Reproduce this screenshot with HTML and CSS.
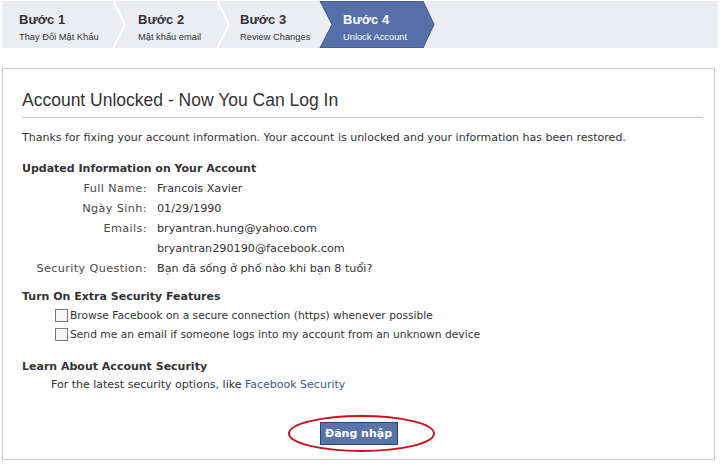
FILE: index.html
```html
<!DOCTYPE html>
<html lang="vi">
<head>
<meta charset="utf-8">
<title>Account Unlocked</title>
<link rel="stylesheet" href="styles.css">
</head>
<body>
<div class="steps">
  <svg class="steps-bg" width="716" height="47" viewBox="0 0 716 47" aria-hidden="true">
    <rect x="0" y="0" width="716" height="47" fill="#ecedf3"/>
    <polyline points="111,-1 123,23.5 111,48" fill="none" stroke="#ffffff" stroke-width="2"/>
    <polyline points="215,-1 227,23.5 215,48" fill="none" stroke="#ffffff" stroke-width="2"/>
    <polygon points="318,0 421,0 432,23.5 421,47 318,47 330,23.5" fill="#5570a8" stroke="#3d5488" stroke-width="1"/>
  </svg>
  <div class="step s1"><div class="st">Bước 1</div><div class="ss">Thay Đổi Mật Khẩu</div></div>
  <div class="step s2"><div class="st">Bước 2</div><div class="ss">Mật khẩu email</div></div>
  <div class="step s3"><div class="st">Bước 3</div><div class="ss">Review Changes</div></div>
  <div class="step s4 active"><div class="st">Bước 4</div><div class="ss">Unlock Account</div></div>
</div>

<div class="card">
  <h1 class="title">Account Unlocked - Now You Can Log In</h1>
  <div class="rule"></div>
  <p class="intro">Thanks for fixing your account information. Your account is unlocked and your information has been restored.</p>

  <h2 class="sec first">Updated Information on Your Account</h2>
  <div class="info">
    <div class="lbl">Full Name:</div><div class="val">Francois Xavier</div>
    <div class="lbl">Ngày Sinh:</div><div class="val">01/29/1990</div>
    <div class="lbl">Emails:</div><div class="val">bryantran.hung@yahoo.com<br>bryantran290190@facebook.com</div>
    <div class="lbl">Security Question:</div><div class="val">Bạn đã sống ở phố nào khi bạn 8 tuổi?</div>
  </div>

  <h2 class="sec second">Turn On Extra Security Features</h2>
  <label class="chk"><span class="box"></span>Browse Facebook on a secure connection (https) whenever possible</label>
  <label class="chk"><span class="box"></span>Send me an email if someone logs into my account from an unknown device</label>

  <h2 class="sec third">Learn About Account Security</h2>
  <p class="learn">For the latest security options, like <a href="#" class="link">Facebook Security</a></p>

  <div class="actions">
    <span class="btn-wrap">
      <button class="btn" type="button">Đăng nhập</button>
      <svg class="circle" width="149" height="39" viewBox="0 0 149 39" aria-hidden="true">
        <ellipse cx="74.5" cy="19.5" rx="72.5" ry="17.5" fill="none" stroke="#c8141c" stroke-width="2"/>
      </svg>
    </span>
  </div>
</div>
</body>
</html>
```
FILE: styles.css
```css
html, body {
  margin: 0;
  padding: 0;
  background: #ffffff;
}
body {
  font-family: "DejaVu Sans", Verdana, sans-serif;
  color: #333333;
  width: 720px;
  height: 464px;
  overflow: hidden;
}
.steps {
  position: relative;
  margin: 1px 0 0 2px;
  width: 716px;
  height: 47px;
  display: flex;
  font-family: "Liberation Sans", Arial, sans-serif;
}
.steps-bg {
  position: absolute;
  left: 0;
  top: 0;
}
.step {
  position: relative;
  padding-top: 11px;
}
.s1 { margin-left: 17px; width: 119px; }
.s2 { width: 102px; }
.s3 { width: 103px; }
.st {
  font-size: 13px;
  font-weight: bold;
  line-height: 16px;
  color: #333333;
}
.ss {
  font-size: 9.3px;
  line-height: 12px;
  margin-top: 3px;
  color: #333333;
}
.active .st, .active .ss { color: #ffffff; }

.card {
  margin: 20px 0 0 2px;
  width: 713px;
  height: 392px;
  border: 1px solid #cccccc;
  padding: 21px 0 0 19px;
  box-sizing: border-box;
}
.title {
  margin: 0;
  font-family: "Liberation Sans", Arial, sans-serif;
  font-size: 17.5px;
  font-weight: normal;
  line-height: 20px;
  color: #333333;
}
.rule {
  margin-top: 7px;
  width: 681px;
  height: 1px;
  background: #c4c4c4;
}
.intro {
  margin: 12px 0 0;
  font-size: 11px;
  line-height: 16px;
}
.sec {
  margin: 0;
  font-size: 11px;
  font-weight: bold;
  color: #333333;
}
.sec.first { margin-top: 13px; line-height: 20px; }
.info {
  display: grid;
  grid-template-columns: 125px auto;
  column-gap: 10px;
  font-size: 11.2px;
  line-height: 20px;
}
.lbl { text-align: right; color: #4a4a4a; letter-spacing: 0.4px; }
.sec.second { margin-top: 9px; line-height: 18px; }
.chk {
  display: flex;
  align-items: center;
  padding-left: 33px;
  font-size: 10.7px;
  line-height: 19px;
}
.box {
  width: 11px;
  height: 11px;
  border: 1px solid #7a7a7a;
  background: #f6f6f6;
  margin-right: 2px;
  margin-top: -1px;
}
.sec.third { margin-top: 14px; line-height: 18px; }
.learn {
  margin: 0;
  padding-left: 29px;
  font-size: 11px;
  line-height: 18px;
}
.link { color: #3b5998; text-decoration: none; }
.actions {
  display: flex;
  justify-content: center;
  margin-top: 28px;
  padding-right: 19px;
}
.btn-wrap { position: relative; display: inline-block; }
.btn {
  display: block;
  width: 78px;
  height: 23px;
  background: #5b74a8;
  border: 1px solid #29447e;
  color: #ffffff;
  font-family: "DejaVu Sans", Verdana, sans-serif;
  font-size: 11px;
  font-weight: bold;
  padding: 0;
}
.circle {
  position: absolute;
  left: -33px;
  top: -8px;
}
```
